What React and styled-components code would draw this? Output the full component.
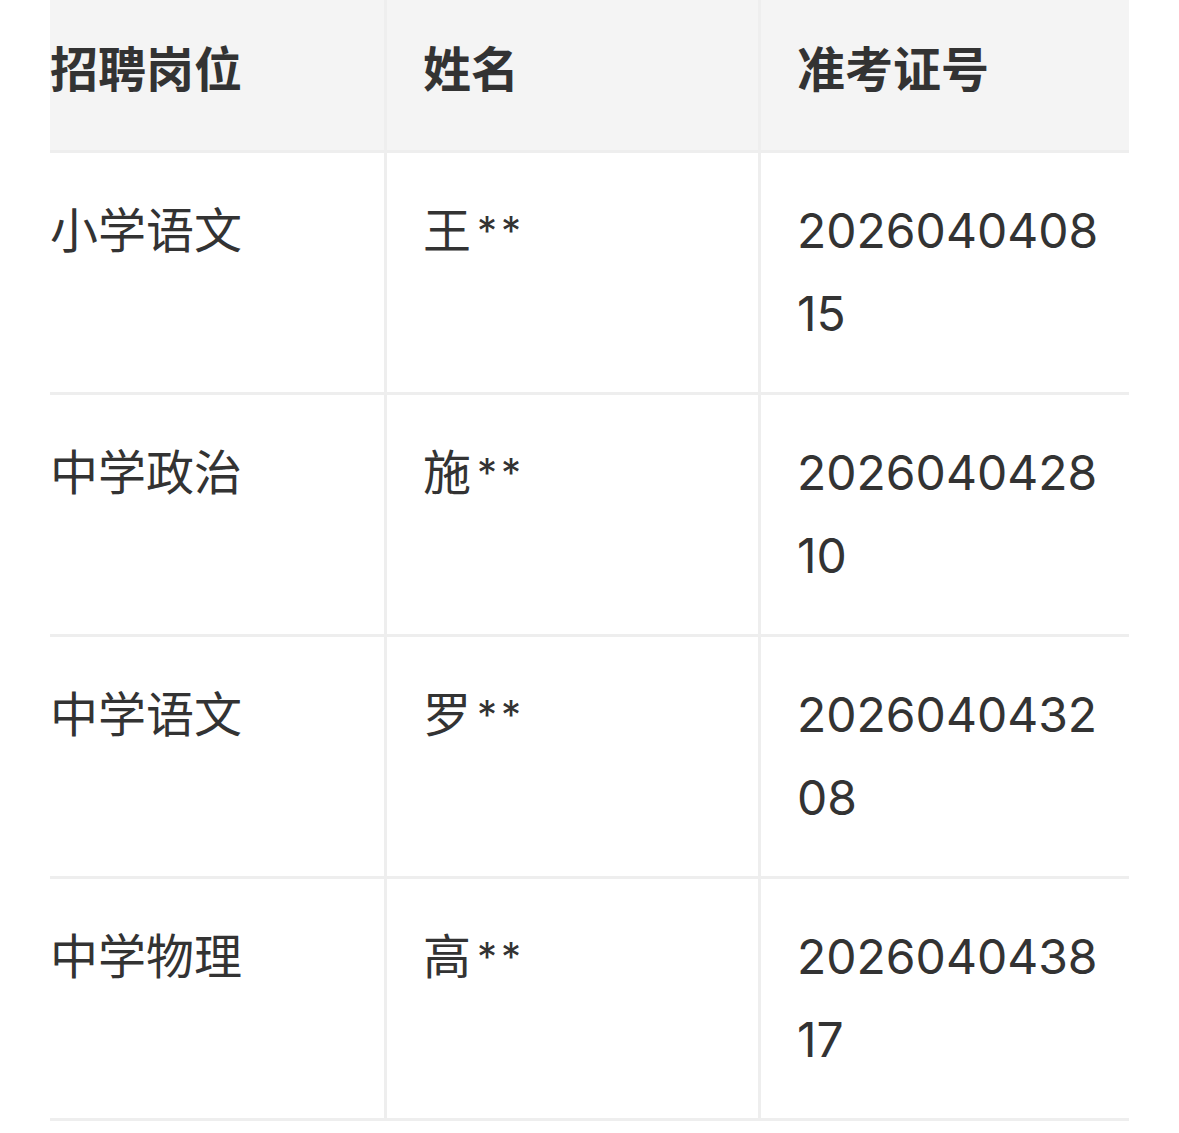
import styled, { createGlobalStyle } from 'styled-components';

const GlobalStyle = createGlobalStyle`
  html, body {
    margin: 0;
    padding: 0;
    background: #ffffff;
  }
  body {
    font-family: "Inter", "Noto Sans CJK SC", sans-serif;
    color: #333333;
  }
`;

const Page = styled.div`
  padding-left: 50px;
  width: 1129px;
  box-sizing: border-box;
`;

const Table = styled.div`
  display: grid;
  grid-template-columns: 337px 374px 368px;
`;

const Cell = styled.div`
  box-sizing: border-box;
  font-size: 48px;
  line-height: 83px;
  padding: ${({ $head }) => ($head ? '28px 36px 39px' : '36px 36px 37px')};
  padding-left: ${({ $first }) => ($first ? '0' : '36px')};
  padding-right: ${({ $last }) => ($last ? '24px' : '36px')};
  background: ${({ $head }) => ($head ? '#f4f4f4' : '#ffffff')};
  font-weight: ${({ $head }) => ($head ? 700 : 400)};
  border-bottom: 3px solid #eeeeee;
  border-right: ${({ $last }) => ($last ? 'none' : '3px solid #eeeeee')};
  word-break: break-all;
`;

const Mask = styled.span`
  font-size: 40px;
  letter-spacing: 4px;
  margin-left: 6px;
  vertical-align: 3px;
`;

const rows = [
  { post: '小学语文', name: '王', id: '202604040815' },
  { post: '中学政治', name: '施', id: '202604042810' },
  { post: '中学语文', name: '罗', id: '202604043208' },
  { post: '中学物理', name: '高', id: '202604043817' },
];

const App = () => {
  return (
    <Page>
      <GlobalStyle />
      <Table>
        <Cell $head $first>招聘岗位</Cell>
        <Cell $head>姓名</Cell>
        <Cell $head $last>准考证号</Cell>
        {rows.map((r) => [
          <Cell key={r.id + 'p'} $first>{r.post}</Cell>,
          <Cell key={r.id + 'n'}>
            {r.name}
            <Mask>**</Mask>
          </Cell>,
          <Cell key={r.id + 'i'} $last>{r.id}</Cell>,
        ])}
      </Table>
    </Page>
  );
};

export default App;
